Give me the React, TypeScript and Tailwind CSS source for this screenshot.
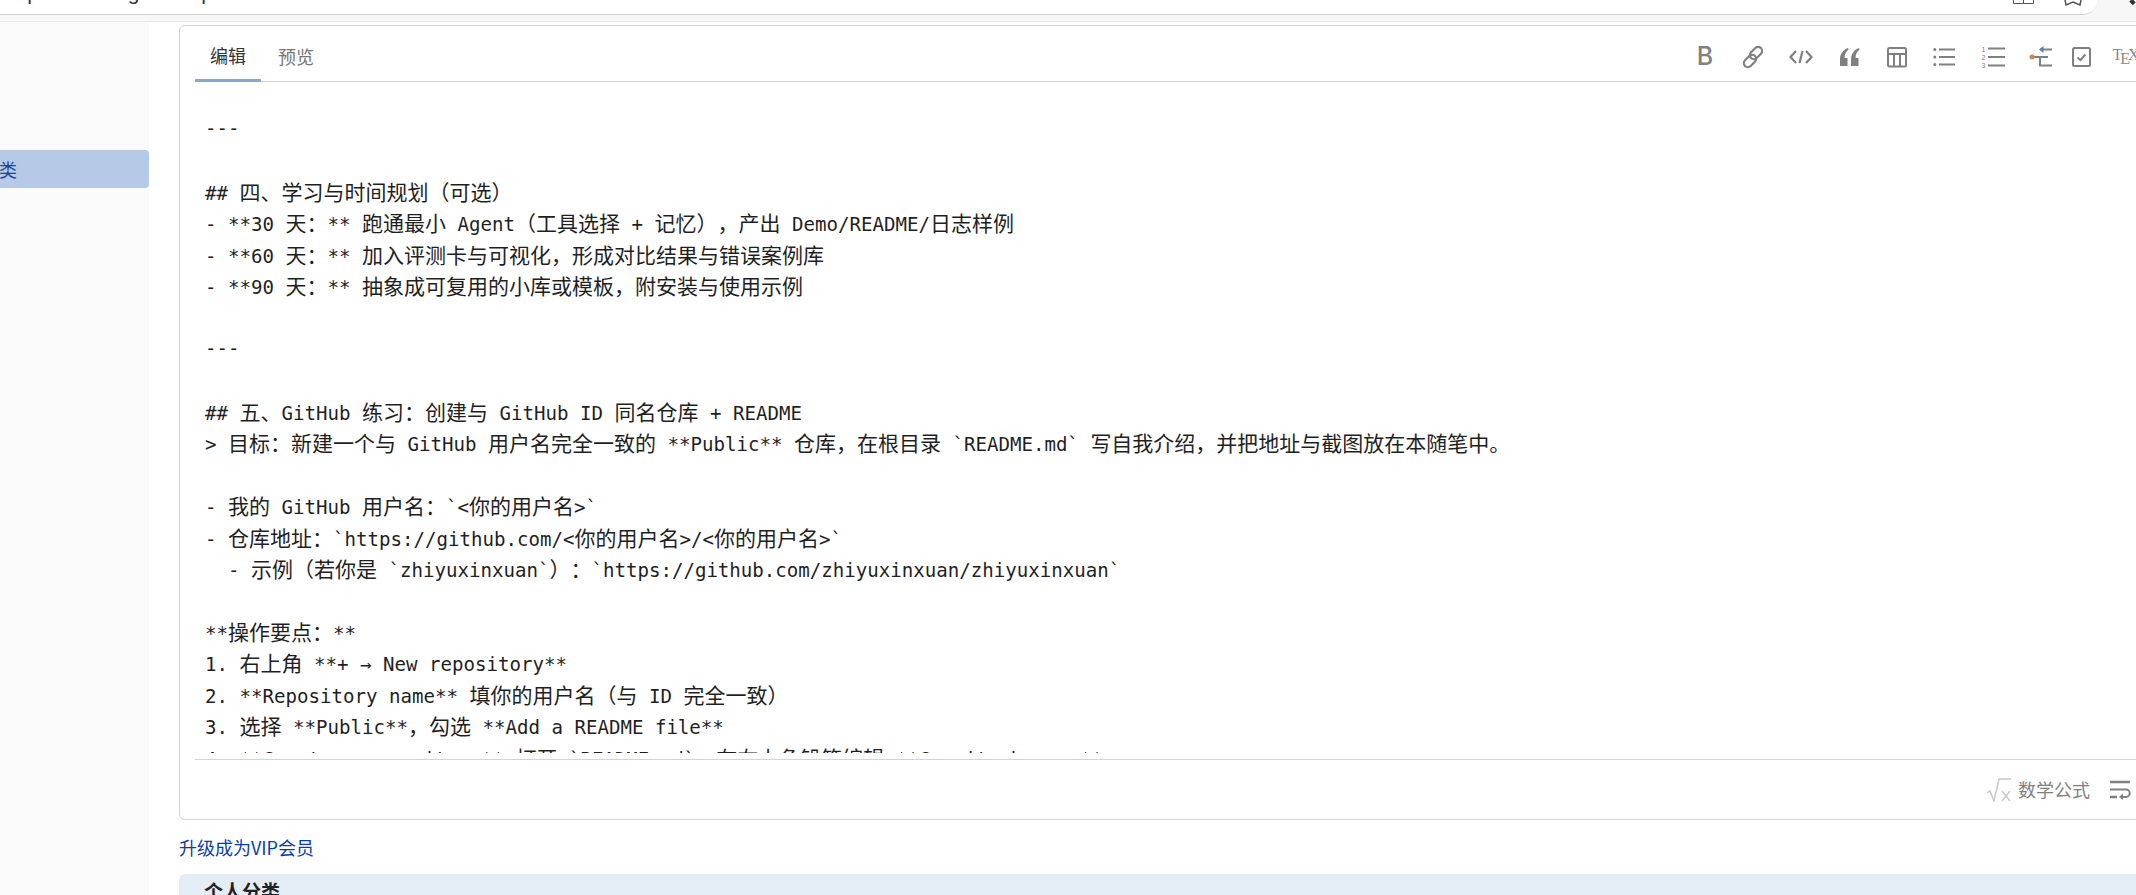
const rows = [
  "---",
  "",
  "## 四、学习与时间规划（可选）",
  "- **30 天：** 跑通最小 Agent（工具选择 + 记忆），产出 Demo/README/日志样例",
  "- **60 天：** 加入评测卡与可视化，形成对比结果与错误案例库",
  "- **90 天：** 抽象成可复用的小库或模板，附安装与使用示例",
  "",
  "---",
  "",
  "## 五、GitHub 练习：创建与 GitHub ID 同名仓库 + README",
  "> 目标：新建一个与 GitHub 用户名完全一致的 **Public** 仓库，在根目录 `README.md` 写自我介绍，并把地址与截图放在本随笔中。",
  "",
  "- 我的 GitHub 用户名：`<你的用户名>`",
  "- 仓库地址：`https://github.com/<你的用户名>/<你的用户名>`",
  "  - 示例（若你是 `zhiyuxinxuan`）：`https://github.com/zhiyuxinxuan/zhiyuxinxuan`",
  "",
  "**操作要点：**",
  "1. 右上角 **+ → New repository**",
  "2. **Repository name** 填你的用户名（与 ID 完全一致）",
  "3. 选择 **Public**，勾选 **Add a README file**",
  "4. **Create a repository** 打开 `README.md`，在右上角铅笔编辑 **Commit changes**",
];

// CJK runs are bigger than the mono latin around them
function Row({ text }: { text: string }) {
  const parts = text.split(/([\u3000-\u9fff\uff00-\uffef]+)/);
  return (
    <div className="h-[31.45px] leading-[31.45px] whitespace-pre [text-spacing-trim:space-all]">
      {parts.map((p, i) =>
        i % 2 === 1 ? (
          <span key={i} className="text-[21px] font-['Noto_Sans_CJK_SC',sans-serif]">{p}</span>
        ) : (
          <span key={i} className="text-[19.1px] font-['DejaVu_Sans_Mono',monospace]">{p}</span>
        )
      )}
    </div>
  );
}

function Cell({ children, className = "" }: { children: React.ReactNode; className?: string }) {
  return <div className={`w-[48px] h-[24px] shrink-0 flex items-center justify-center text-[#808080] ${className}`}>{children}</div>;
}

function Toolbar() {
  return (
    <div className="flex items-center pt-[6px]">
      <Cell>
        <span className="text-[25px] font-medium leading-none font-['Inter',sans-serif]">B</span>
      </Cell>
      <Cell>
        <svg width="24" height="24" viewBox="0 0 24 24" fill="none" stroke="currentColor" strokeWidth="2.200">
          <rect x="11" y="1" width="8" height="14" rx="4" transform="rotate(45 15 8)" />
          <rect x="5" y="9" width="8" height="14" rx="4" transform="rotate(45 9 16)" />
        </svg>
      </Cell>
      <Cell>
        <svg width="24" height="24" viewBox="0 0 24 24" fill="none" stroke="currentColor" strokeWidth="2.200">
          <path d="M7 6 1.500 12 7 18M13.500 6 10.500 18M17 6 22.500 12 17 18" />
        </svg>
      </Cell>
      <Cell>
        <svg width="24" height="24" viewBox="0 0 24 24" fill="currentColor">
          <path d="M3 21v-7C3 9 6 5 11 3l.6 1.400C9 6.500 7.600 9 7.600 13H10.500v8zM14 21v-7c0-5 3-9 8-11l.6 1.400C20 6.500 18.600 9 18.600 13H21.500v8z" />
        </svg>
      </Cell>
      <Cell>
        <svg width="24" height="24" viewBox="0 0 24 24" fill="none" stroke="currentColor" strokeWidth="2">
          <rect x="3" y="3" width="18" height="18.500" rx="1.500" />
          <path d="M3 9h18M9 9v12M15 9v12" />
        </svg>
      </Cell>
      <Cell>
        <svg width="24" height="24" viewBox="0 0 24 24" fill="none" stroke="currentColor" strokeWidth="2">
          <path d="M6 4.500h16M6 12h16M6 19.500h16" />
          <circle cx="1.800" cy="4.500" r="1.500" fill="currentColor" stroke="none" />
          <circle cx="1.800" cy="12" r="1.500" fill="currentColor" stroke="none" />
          <circle cx="1.800" cy="19.500" r="1.500" fill="currentColor" stroke="none" />
        </svg>
      </Cell>
      <Cell>
        <svg width="24" height="24" viewBox="0 0 24 24" fill="none" stroke="currentColor" strokeWidth="2">
          <path d="M7 3.500h17M7 12h17M7 20.500h17" />
          <text x="0.500" y="6.500" fontSize="7" fill="currentColor" stroke="none" fontFamily="Liberation Sans">1</text>
          <text x="0.500" y="14.500" fontSize="7" fill="currentColor" stroke="none" fontFamily="Liberation Sans">2</text>
          <text x="0.500" y="23" fontSize="7" fill="currentColor" stroke="none" fontFamily="Liberation Sans">3</text>
        </svg>
      </Cell>
      <Cell>
        <svg width="24" height="24" viewBox="0 0 24 24" fill="none" strokeWidth="2">
          <path d="M4 12h15M11 12v8.500h12M11 4.500h12" stroke="#808080" />
          <path d="M14.500 1 10 4.500 14.500 8z" fill="#5f7fa8" />
          <circle cx="3" cy="12" r="2.500" fill="#c98a55" />
        </svg>
      </Cell>
      <Cell className="-ml-[7px]">
        <svg width="24" height="24" viewBox="0 0 24 24" fill="none" stroke="currentColor" strokeWidth="2">
          <rect x="3" y="3" width="17" height="18" rx="1.500" />
          <path d="M7.500 12.500 10.500 15 15.500 9.500" />
        </svg>
      </Cell>
      <Cell className="-ml-[4px] mr-[4px]">
        <span className="flex items-start text-[#8a8a8a] leading-none text-[16px] font-['Liberation_Serif',serif]">
          T<span className="-ml-[2px] mt-[4px]">E</span>
          <span className="-ml-[2px]">X</span>
        </span>
      </Cell>
    </div>
  );
}

export default function App() {
  return (
    <div className="relative h-[895px] w-full overflow-hidden bg-white text-[#222] font-['Noto_Sans_CJK_SC',sans-serif]">
      {/* browser chrome, only the bottom edge is on screen */}
      <div className="h-[22px] bg-[#f7f7f7] border-b border-[#e6e6e6]">
        <div className="relative h-[15px] w-[2098px] bg-white border-b border-[#cfcfcf] rounded-br-[16px] overflow-hidden">
          <div className="-mt-[17px] pl-[4px] text-[21px] leading-[20px] whitespace-pre font-['Liberation_Sans',sans-serif] text-[#333]">
            https://i.cnblogs.com/posts/edit
          </div>
          <svg className="absolute left-[2013px] top-0" width="21" height="4" viewBox="0 0 21 4" fill="none" stroke="#555">
            <path d="M.5 0v3.500h20V0M10.500 0v3.500" />
          </svg>
          <svg className="absolute left-[2063px] top-0" width="20" height="6" viewBox="0 0 20 6" fill="none" stroke="#555" strokeWidth="1.500">
            <path d="M2 0 3 5 10 2 17 5 18 0" />
          </svg>
        </div>
        <div className="absolute left-[2130px] top-0 h-[4px] w-[5px] bg-[#333] rotate-45" />
      </div>

      <div className="flex h-[873px]">
        <aside className="w-[149px] shrink-0 bg-[#fafafa] pt-[128px]">
          <div className="h-[38px] flex items-center justify-end pr-[132px] rounded-r-[4px] bg-[#b6cae8] text-[18px] text-[#1d3fa0]">类</div>
        </aside>
        <main className="flex-1 min-w-0 pl-[30px] pt-[3px] overflow-hidden">
          <div className="w-[1991px] h-[795px] border border-[#d4d4d4] rounded-[6px] px-[15px] flex flex-col">
            <div className="h-[56px] shrink-0 flex items-center justify-between border-b border-[#d4d4d4]">
              <div className="flex h-full">
                <div className="w-[66px] pt-[5px] flex items-center justify-center text-[18px] text-[#333] border-b-[3px] border-[#8ea5cb] -mb-px">编辑</div>
                <div className="w-[70px] pt-[6px] flex items-center justify-center text-[18px] text-[#777]">预览</div>
              </div>
              <Toolbar />
            </div>
            <div className="h-[671px] shrink-0 overflow-hidden pt-[31px] pl-[10px] text-[#1f1f1f]">
              {rows.map((r, i) => (
                <Row key={i} text={r} />
              ))}
            </div>
            <div className="mt-[6px] flex-1 border-t border-[#d4d4d4] flex items-center justify-end pr-[23px] text-[#808080]">
              <svg width="24" height="24" viewBox="0 0 24 24" fill="none" stroke="#c8c8c8" strokeWidth="1.500" className="mr-[7px]">
                <path d="M0 15 3 13 7 23 12 1H24M15 13 23 23M23 13 15 23" />
              </svg>
              <span className="text-[18px] mr-[20px]">数学公式</span>
              <svg width="21" height="20" viewBox="0 0 21 20" fill="none" stroke="#808080" strokeWidth="2.500">
                <path d="M0 2h20" />
                <path d="M0 9.500h16a3.500 3.500 0 0 1 0 7.500H10" strokeWidth="2" />
                <path d="M0 17h7" />
                <path d="M13 13.500 9 17l4 3z" fill="#808080" stroke="none" />
              </svg>
            </div>
          </div>
          <div className="h-[54px] flex items-center text-[18px] text-[#0a3ca8]">升级成为VIP会员</div>
          <div className="h-[60px] w-[2000px] bg-[#e4ecf6] rounded-t-[6px] pl-[25px] pt-[3px] text-[19px] font-bold text-[#222]">个人分类</div>
        </main>
      </div>
    </div>
  );
}
